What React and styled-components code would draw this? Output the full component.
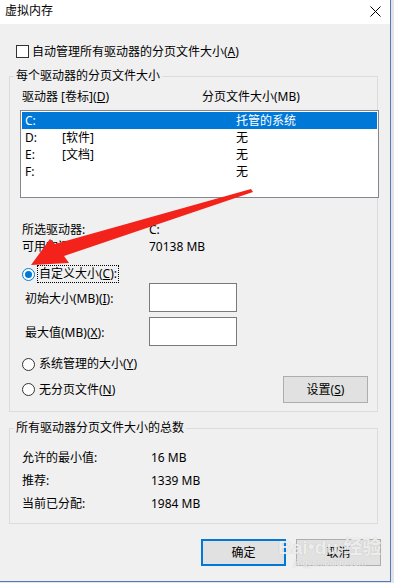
import React from 'react';
import styled, { createGlobalStyle } from 'styled-components';

const GlobalStyle = createGlobalStyle`
  html, body {
    margin: 0;
    padding: 0;
    background: #e4e4e4;
  }
  body {
    font-family: "Noto Sans", "Noto Sans CJK SC", sans-serif;
    font-size: 12px;
    color: #000;
  }
`;

const drives = [
  { letter: 'C:', label: '', size: '托管的系统', selected: true },
  { letter: 'D:', label: '[软件]', size: '无' },
  { letter: 'E:', label: '[文档]', size: '无' },
  { letter: 'F:', label: '', size: '无' },
];

const totals = [
  ['允许的最小值:', '16 MB'],
  ['推荐:', '1339 MB'],
  ['当前已分配:', '1984 MB'],
];

const App = () => {
  return (
    <>
      <GlobalStyle />
      <Window>
        <TitleBar>
          <Title>虚拟内存</Title>
          <svg width="11" height="11" viewBox="0 0 11 11">
            <path d="M0.5 0.5 L10.5 10.5 M10.5 0.5 L0.5 10.5" stroke="#000" strokeWidth="1" />
          </svg>
        </TitleBar>

        <Body>
          <CheckRow>
            <CheckBox />
            <CheckLabel>自动管理所有驱动器的分页文件大小(<u>A</u>)</CheckLabel>
          </CheckRow>

          <GroupBox $mt={10}>
            <Legend>每个驱动器的分页文件大小</Legend>
            <GroupInner $pb={8}>
              <HeaderRow>
                <HeaderCell $w={180}>驱动器 [卷标](<u>D</u>)</HeaderCell>
                <HeaderCell>分页文件大小(MB)</HeaderCell>
              </HeaderRow>
              <ListBox>
                {drives.map((d) => (
                  <DriveRow key={d.letter} $selected={d.selected}>
                    <span>{d.letter}</span>
                    <span>{d.label}</span>
                    <span>{d.size}</span>
                  </DriveRow>
                ))}
              </ListBox>

              <InfoRow $mt={23}>
                <InfoLabel $w={127}>所选驱动器:</InfoLabel>
                <span>C:</span>
              </InfoRow>
              <InfoRow>
                <InfoLabel $w={127}>可用空间</InfoLabel>
                <span>70138 MB</span>
              </InfoRow>

              <RadioRow $mt={10}>
                <Radio $checked />
                <FocusLabel>自定义大小(<u>C</u>):</FocusLabel>
              </RadioRow>
              <InputRow>
                <InputLabel>初始大小(MB)(<u>I</u>):</InputLabel>
                <TextBox />
              </InputRow>
              <InputRow $mt={5}>
                <InputLabel>最大值(MB)(<u>X</u>):</InputLabel>
                <TextBox />
              </InputRow>

              <RadioRow $mt={9}>
                <Radio />
                <RadioLabel>系统管理的大小(<u>Y</u>)</RadioLabel>
              </RadioRow>
              <LastRow>
                <RadioRow>
                  <Radio />
                  <RadioLabel>无分页文件(<u>N</u>)</RadioLabel>
                </RadioRow>
                <Button>设置(<u>S</u>)</Button>
              </LastRow>
            </GroupInner>
          </GroupBox>

          <GroupBox $mt={8}>
            <Legend>所有驱动器分页文件大小的总数</Legend>
            <GroupInner $pt={10} $pb={8}>
              {totals.map(([label, value]) => (
                <TotalRow key={label}>
                  <InfoLabel $w={129}>{label}</InfoLabel>
                  <span>{value}</span>
                </TotalRow>
              ))}
            </GroupInner>
          </GroupBox>

          <Footer>
            <Button $default>确定</Button>
            <Button>取消</Button>
          </Footer>
        </Body>

        <Watermark>
          <Brand>Bai<Paw>●</Paw>du 经验</Brand>
          <Site>jingyan.baidu.com</Site>
        </Watermark>

        <Overlay width="391" height="582" viewBox="0 0 391 582">
          <polygon
            points="31,265 50,239 55,244 251,189 253,192 64,256 69,263"
            fill="#f3231b"
          />
        </Overlay>
      </Window>
    </>
  );
};

const Window = styled.div`
  position: relative;
  width: 390px;
  height: 581px;
  background: #f0f0f0;
  border-right: 1px solid #5279bb;
  border-bottom: 1px solid #5279bb;
  display: flex;
  flex-direction: column;
  overflow: hidden;
`;

const TitleBar = styled.div`
  height: 24px;
  flex: none;
  background: #fff;
  display: flex;
  align-items: center;
  justify-content: space-between;
  padding: 0 9px 2px 5px;
  box-sizing: border-box;
`;

const Title = styled.span`
  line-height: 16px;
`;

const Body = styled.div`
  flex: 1;
  padding: 0 9px 0 9px;
  display: flex;
  flex-direction: column;
`;

const CheckRow = styled.div`
  display: flex;
  align-items: center;
  height: 13px;
  margin-top: 21px;
  padding-left: 7px;
`;

const CheckBox = styled.span`
  width: 13px;
  height: 13px;
  box-sizing: border-box;
  border: 1px solid #333;
  background: #fff;
`;

const CheckLabel = styled.span`
  margin-left: 3px;
  line-height: 16px;
`;

const GroupBox = styled.fieldset`
  width: 369px;
  box-sizing: border-box;
  min-width: 0;
  margin: ${(p) => p.$mt}px 0 0 0;
  padding: 0;
  border: 1px solid #dcdcdc;
`;

const Legend = styled.legend`
  margin-left: 4px;
  padding: 0 2px;
  line-height: 16px;
`;

const GroupInner = styled.div`
  padding: ${(p) => p.$pt || 5}px 0 ${(p) => p.$pb}px 10px;
`;

const HeaderRow = styled.div`
  display: flex;
  height: 16px;
  line-height: 16px;
  padding-left: 2px;
`;

const HeaderCell = styled.span`
  width: ${(p) => (p.$w ? `${p.$w}px` : 'auto')};
`;

const ListBox = styled.div`
  margin-top: 5px;
  width: 359px;
  height: 88px;
  box-sizing: border-box;
  border: 1px solid #828790;
  background: #fff;
  padding: 1px;
`;

const DriveRow = styled.div`
  display: grid;
  grid-template-columns: 37px 174px 1fr;
  height: 17px;
  line-height: 17px;
  padding-left: 3px;
  background: ${(p) => (p.$selected ? '#0078d7' : 'transparent')};
  color: ${(p) => (p.$selected ? '#fff' : '#000')};
`;

const InfoRow = styled.div`
  display: flex;
  height: 17px;
  line-height: 17px;
  padding-left: 2px;
  margin-top: ${(p) => p.$mt || 0}px;
`;

const InfoLabel = styled.span`
  width: ${(p) => p.$w}px;
  flex: none;
`;

const RadioRow = styled.div`
  display: flex;
  align-items: center;
  height: 18px;
  padding-left: 2px;
  margin-top: ${(p) => p.$mt || 0}px;
`;

const Radio = styled.span`
  width: 13px;
  height: 13px;
  box-sizing: border-box;
  border-radius: 50%;
  border: 1px solid ${(p) => (p.$checked ? '#0078d7' : '#333')};
  background: #fff;
  display: flex;
  align-items: center;
  justify-content: center;
  flex: none;
  &::after {
    content: '';
    display: ${(p) => (p.$checked ? 'block' : 'none')};
    width: 7px;
    height: 7px;
    border-radius: 50%;
    background: #0078d7;
  }
`;

const RadioLabel = styled.span`
  margin-left: 4px;
  line-height: 16px;
`;

const FocusLabel = styled.span`
  margin-left: 2px;
  padding: 0 1px;
  line-height: 16px;
  border: 1px dotted #000;
`;

const InputRow = styled.div`
  display: flex;
  align-items: center;
  height: 29px;
  padding-left: 5px;
  margin-top: ${(p) => p.$mt || 0}px;
`;

const InputLabel = styled.span`
  width: 124px;
  flex: none;
`;

const TextBox = styled.span`
  width: 88px;
  height: 29px;
  box-sizing: border-box;
  border: 1px solid #7a7a7a;
  background: #fff;
`;

const LastRow = styled.div`
  display: flex;
  align-items: center;
  justify-content: space-between;
  height: 27px;
  margin-top: 3px;
  padding-right: 9px;
`;

const Button = styled.div`
  width: 85px;
  height: 27px;
  box-sizing: border-box;
  border: ${(p) => (p.$default ? '2px solid #0078d7' : '1px solid #adadad')};
  background: #e1e1e1;
  display: flex;
  align-items: center;
  justify-content: center;
  line-height: 16px;
`;

const TotalRow = styled.div`
  display: flex;
  height: 23px;
  line-height: 23px;
  padding-left: 2px;
`;

const Footer = styled.div`
  display: flex;
  justify-content: flex-end;
  gap: 10px;
  margin-top: 15px;
`;

const Watermark = styled.div`
  position: absolute;
  left: 278px;
  top: 536px;
  display: flex;
  flex-direction: column;
  align-items: center;
  pointer-events: none;
  color: rgba(255, 255, 255, 0.75);
  text-shadow: 0 0 1px rgba(150, 150, 150, 0.6);
`;

const Brand = styled.span`
  font-family: "Liberation Sans", "Noto Sans CJK SC", sans-serif;
  font-size: 19px;
  font-weight: bold;
  line-height: 20px;
`;

const Paw = styled.span`
  font-size: 12px;
  vertical-align: 4px;
`;

const Site = styled.span`
  font-family: "Liberation Sans", sans-serif;
  font-size: 9px;
  line-height: 10px;
`;

const Overlay = styled.svg`
  position: absolute;
  left: 0;
  top: 0;
  pointer-events: none;
`;

export default App;
